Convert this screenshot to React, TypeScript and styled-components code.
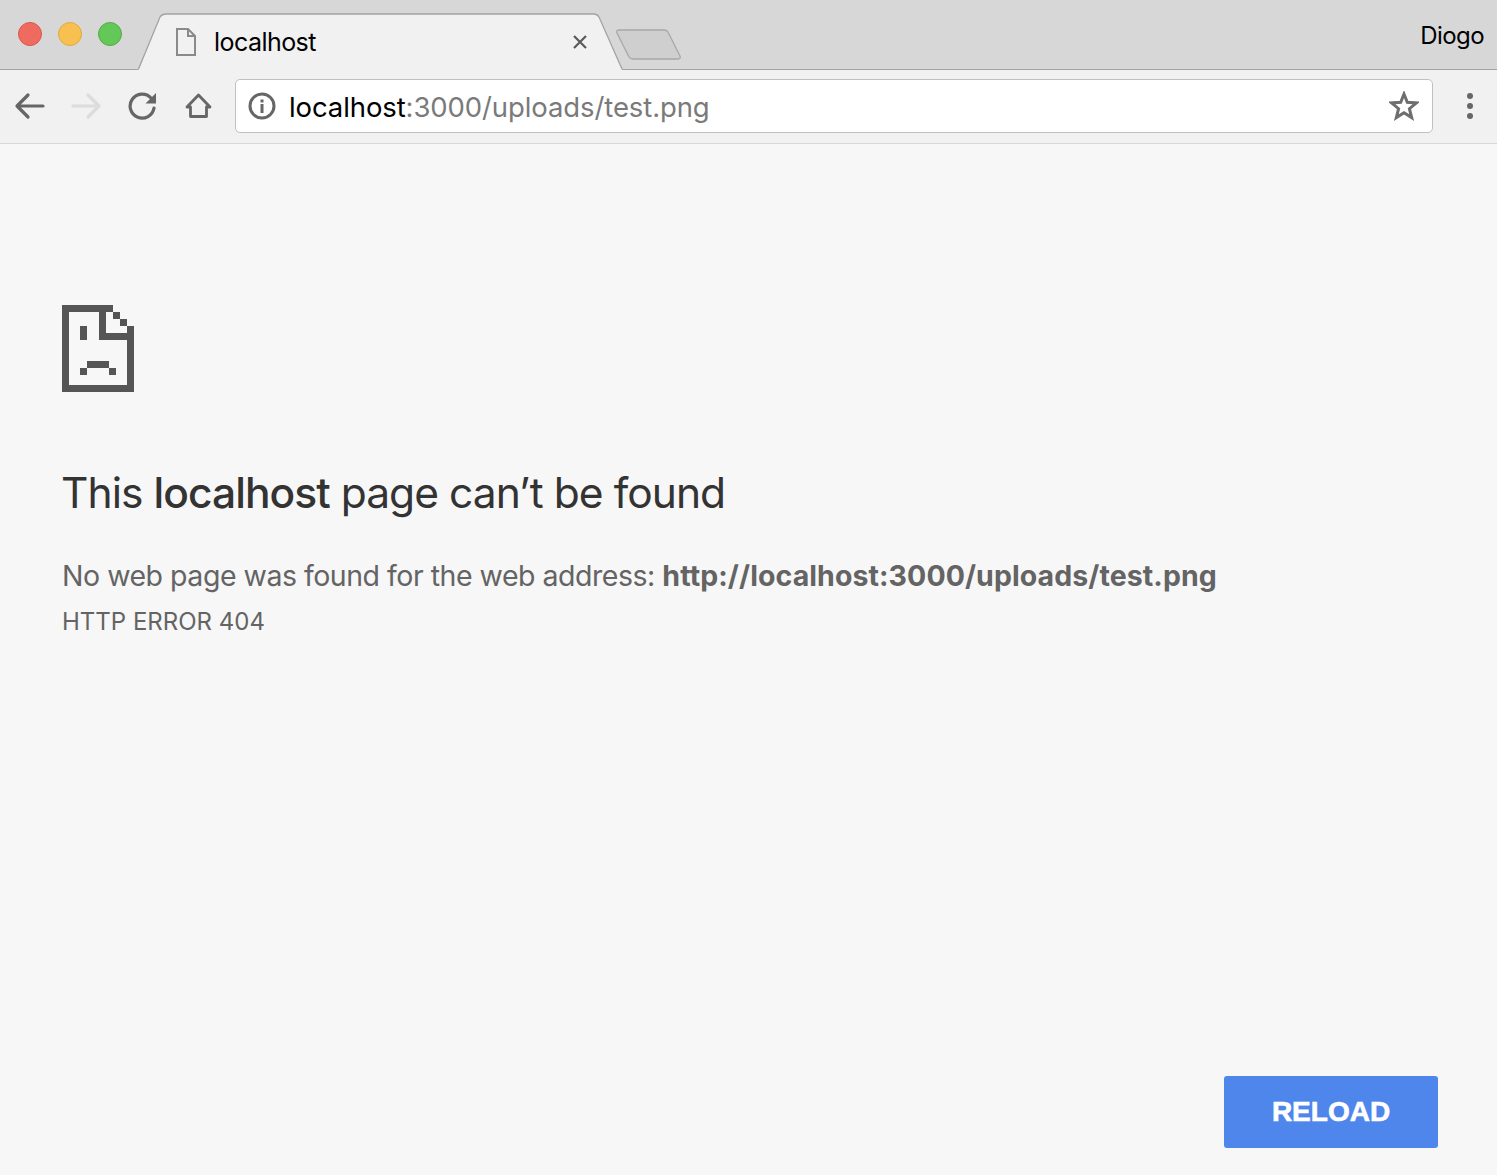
import React from 'react';
import styled, { createGlobalStyle } from 'styled-components';

const GlobalStyle = createGlobalStyle`
  html, body {
    margin: 0;
    padding: 0;
    background: #f7f7f7;
  }
  body {
    font-family: Inter, Roboto, "Liberation Sans", sans-serif;
  }
`;

const Page = styled.div`
  width: 1497px;
  height: 1175px;
  display: flex;
  flex-direction: column;
  overflow: hidden;
`;

const TitleBar = styled.div`
  height: 69px;
  flex: none;
  display: flex;
  align-items: flex-start;
  position: relative;
  background: #d7d7d7;
  border-bottom: 1px solid #a3a3a3;
  z-index: 1;
`;

const Lights = styled.div`
  width: 138px;
  flex: none;
  display: flex;
  gap: 16px;
  padding: 22px 0 0 18px;
  box-sizing: border-box;
`;

const Light = styled.span<{ $fill: string; $edge: string }>`
  width: 24px;
  height: 24px;
  box-sizing: border-box;
  border-radius: 50%;
  background: ${(p) => p.$fill};
  border: 1px solid ${(p) => p.$edge};
`;

const Tab = styled.div`
  width: 486px;
  height: 57px;
  flex: none;
  margin-top: 13px;
  position: relative;
  display: flex;
  align-items: center;
  padding: 0 36px 0 38px;
  box-sizing: border-box;
  font-size: 25px;
  letter-spacing: -0.55px;
  color: #000;
`;

const TabShape = styled.svg`
  position: absolute;
  left: 0;
  top: 0;
`;

const TabIcon = styled.svg`
  position: relative;
  flex: none;
`;

const TabTitle = styled.span`
  position: relative;
  flex: 1;
  margin-left: 18px;
`;

const NewTab = styled.svg`
  flex: none;
  margin: 29px 0 0 -8px;
`;

const Profile = styled.div`
  margin: 21px 13px 0 auto;
  font-size: 24px;
  letter-spacing: -0.6px;
  color: #000;
`;

const ToolBar = styled.div`
  height: 74px;
  flex: none;
  display: flex;
  align-items: center;
  background: #f1f1f1;
  border-bottom: 1px solid #d8d8d8;
  padding: 0 0 1px 14px;
  box-sizing: border-box;
`;

const NavIcon = styled.svg<{ $gap: number }>`
  flex: none;
  margin-right: ${(p) => p.$gap}px;
`;

const Omnibox = styled.div`
  width: 1198px;
  height: 54px;
  flex: none;
  display: flex;
  align-items: center;
  box-sizing: border-box;
  background: #fff;
  border: 1px solid #c0c0c0;
  border-radius: 5px;
  padding: 0 13px 0 12px;
  font-size: 27.5px;
  letter-spacing: -0.1px;
`;

const Host = styled.span`
  color: #000;
  margin: 2px 0 0 13px;
`;

const Rest = styled.span`
  color: #7a7a7a;
  flex: 1;
  margin-top: 2px;
`;

const Menu = styled.svg`
  flex: none;
  margin-left: 33px;
`;

const Content = styled.main`
  flex: 1;
  position: relative;
  display: flex;
  flex-direction: column;
  background: #f7f7f7;
  padding: 161px 59px 27px 62px;
`;

const SadFile = styled.svg`
  display: block;
  flex: none;
  shape-rendering: crispEdges;
`;

const Heading = styled.h1`
  margin: 69px 0 0 -1px;
  font-size: 42.5px;
  line-height: 64px;
  font-weight: 400;
  letter-spacing: -0.95px;
  color: #333;
`;

const Strong = styled.strong`
  font-weight: 500;
`;

const Message = styled.p`
  margin: 31px 0 0;
  font-size: 28.5px;
  line-height: 40px;
  letter-spacing: -0.48px;
  color: #646464;
`;

const Bold = styled.strong`
  font-weight: 700;
  letter-spacing: 0.08px;
`;

const ErrorCode = styled.div`
  margin-top: 11px;
  font-size: 24px;
  line-height: 30px;
  color: #646464;
`;

const Reload = styled.button`
  margin: auto 0 0 auto;
  width: 214px;
  height: 72px;
  border: 0;
  border-radius: 3px;
  background: #4f86ec;
  color: #fff;
  font-family: "Liberation Sans", Arial, sans-serif;
  font-size: 28px;
  font-weight: 700;
  -webkit-text-stroke: 0.6px #fff;
`;

// sad page icon, each entry is x, y, width, height in the 72x87 box
const sadRects = [
  [0, 0, 51, 7],
  [0, 0, 7, 87],
  [0, 80, 72, 7],
  [65, 21, 7, 66],
  [37, 7, 7, 28],
  [37, 28, 35, 7],
  [51, 7, 7, 7],
  [58, 14, 7, 7],
  [18, 21, 7, 14],
  [25, 56, 22, 7],
  [18, 63, 7, 7],
  [47, 63, 7, 7],
];

const SadIcon = () => (
  <SadFile width="72" height="87" viewBox="0 0 72 87" fill="#555">
    {sadRects.map(([x, y, w, h]) => (
      <rect key={`${x}-${y}-${w}`} x={x} y={y} width={w} height={h} />
    ))}
  </SadFile>
);

export default function App() {
  return (
    <Page>
      <GlobalStyle />
      <TitleBar>
        <Lights>
          <Light $fill="#ef6b60" $edge="#d9574d" />
          <Light $fill="#f8c050" $edge="#e2a93d" />
          <Light $fill="#63c857" $edge="#52ad46" />
        </Lights>
        <Tab>
          <TabShape width="486" height="58" viewBox="0 0 486 58">
            <path
              d="M0.5 57 L22 4 Q24 1 28 1 H456 Q459 1 461 4 L484 57 Z"
              fill="#f1f1f1"
            />
            <path
              d="M0.5 56 L22 4 Q24 1 28 1 H456 Q459 1 461 4 L484 56"
              fill="none"
              stroke="#a3a3a3"
              strokeWidth="1.3"
            />
          </TabShape>
          <TabIcon width="20" height="28" viewBox="0 0 20 28" fill="none" stroke="#8a8a8a" strokeWidth="2">
            <path d="M1 1 H12 L19 8 V27 H1 Z M12 1 V8 H19" />
          </TabIcon>
          <TabTitle>localhost</TabTitle>
          <TabIcon width="16" height="16" viewBox="0 0 16 16" fill="none" stroke="#5a5a5a" strokeWidth="2.2">
            <path d="M2 2 L14 14 M14 2 L2 14" />
          </TabIcon>
        </Tab>
        <NewTab width="66" height="32" viewBox="0 0 66 32">
          <path
            d="M3 1 H48 Q51 1 52 3 L64 27 Q65 30 62 30 H17 Q14 30 13 28 L1 4 Q0 1 3 1 Z"
            fill="#cfcfcf"
            stroke="#a8a8a8"
            strokeWidth="1.3"
          />
        </NewTab>
        <Profile>Diogo</Profile>
      </TitleBar>
      <ToolBar>
        <NavIcon $gap={24} width="32" height="28" viewBox="0 0 32 28" fill="none" stroke="#666" strokeWidth="3.2" strokeLinecap="round" strokeLinejoin="round">
          <path d="M29 14 H4 M14 3 L3 14 L14 25" />
        </NavIcon>
        <NavIcon $gap={26} width="32" height="28" viewBox="0 0 32 28" fill="none" stroke="#dcdcdc" strokeWidth="3.2" strokeLinecap="round" strokeLinejoin="round">
          <path d="M3 14 H28 M18 3 L29 14 L18 25" />
        </NavIcon>
        <NavIcon $gap={27} width="30" height="28" viewBox="0 0 30 28" fill="none">
          <path d="M23 6 A12 12 0 1 0 26 16" stroke="#666" strokeWidth="3.2" strokeLinecap="round" />
          <path d="M28 1 V11.5 H17.5 Z" fill="#666" />
        </NavIcon>
        <NavIcon $gap={22} width="28" height="28" viewBox="0 0 28 28" fill="none" stroke="#666" strokeWidth="2.8" strokeLinejoin="round">
          <path d="M2 15 L13.5 3 L25 15 H21.5 V24.5 H5.5 V15 Z" />
        </NavIcon>
        <Omnibox>
          <svg width="28" height="28" viewBox="0 0 28 28" fill="none">
            <circle cx="14" cy="14" r="12" stroke="#666" strokeWidth="3" />
            <rect x="12.5" y="12" width="3" height="9" fill="#666" />
            <rect x="12.5" y="7.5" width="3" height="3" fill="#666" />
          </svg>
          <Host>localhost</Host>
          <Rest>:3000/uploads/test.png</Rest>
          <svg width="30" height="30" viewBox="0 0 30 30" fill="none" stroke="#6e6e6e" strokeWidth="3" strokeLinejoin="miter">
            <path d="M15 3 L18.3 11.3 L27.5 11.9 L20.4 17.7 L22.7 26.6 L15 21.7 L7.3 26.6 L9.6 17.7 L2.5 11.9 L11.7 11.3 Z" />
          </svg>
        </Omnibox>
        <Menu width="8" height="28" viewBox="0 0 8 28" fill="#666">
          <circle cx="4" cy="4" r="3" />
          <circle cx="4" cy="14" r="3" />
          <circle cx="4" cy="24" r="3" />
        </Menu>
      </ToolBar>
      <Content>
        <SadIcon />
        <Heading>
          This <Strong>localhost</Strong> page can’t be found
        </Heading>
        <Message>
          No web page was found for the web address: <Bold>http://localhost:3000/uploads/test.png</Bold>
        </Message>
        <ErrorCode>HTTP ERROR 404</ErrorCode>
        <Reload>RELOAD</Reload>
      </Content>
    </Page>
  );
}
